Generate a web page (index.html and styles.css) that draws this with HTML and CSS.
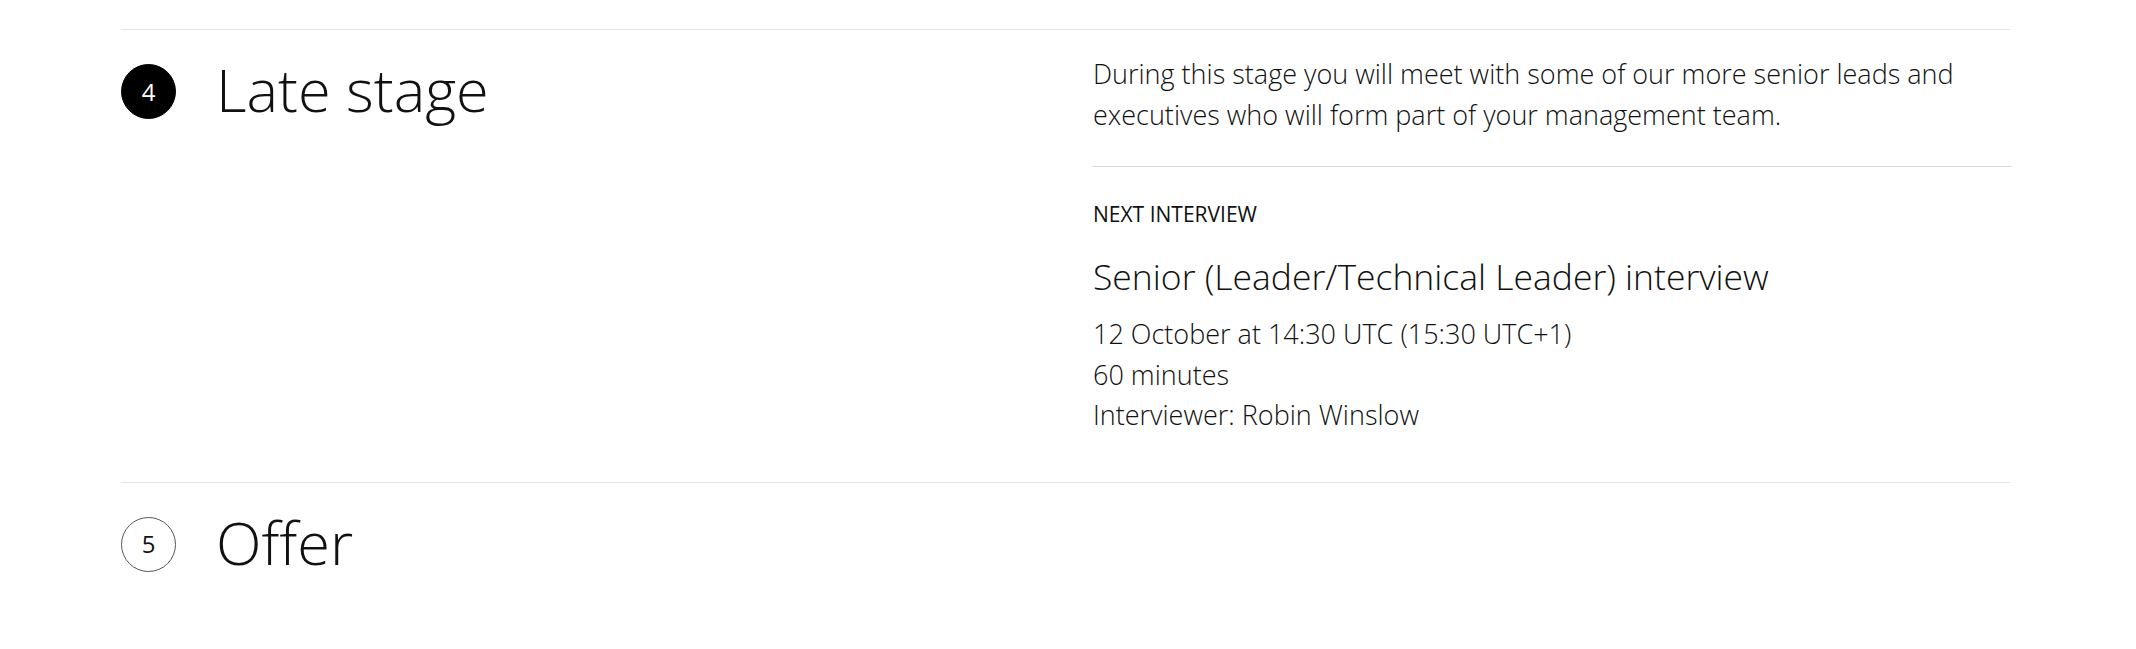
FILE: index.html
```html
<!DOCTYPE html>
<html lang="en">
<head>
<meta charset="utf-8">
<title>Interview stages</title>
<link rel="stylesheet" href="styles.css">
</head>
<body>
<main class="stages">
  <section class="stage">
    <div class="stage__title">
      <span class="stage__num stage__num--current">4</span>
      <h2 class="stage__heading">Late stage</h2>
    </div>
    <div class="stage__body">
      <p class="stage__desc">During this stage you will meet with some of our more senior leads and executives who will form part of your management team.</p>
      <hr class="stage__divider">
      <h4 class="label">NEXT INTERVIEW</h4>
      <h3 class="interview__title">Senior (Leader/Technical Leader) interview</h3>
      <ul class="interview__meta">
        <li>12 October at 14:30 UTC (15:30 UTC+1)</li>
        <li>60 minutes</li>
        <li>Interviewer: Robin Winslow</li>
      </ul>
    </div>
  </section>
  <section class="stage">
    <div class="stage__title">
      <span class="stage__num">5</span>
      <h2 class="stage__heading">Offer</h2>
    </div>
  </section>
</main>
</body>
</html>
```
FILE: styles.css
```css
body {
  margin: 0;
  background: #fff;
  color: #111;
  font-family: "Open Sans", "Noto Sans", sans-serif;
}

.stages {
  width: 1890px;
  margin-left: 121px;
  padding-top: 29px;
}

.stage {
  display: grid;
  grid-template-columns: 1fr 1fr;
  column-gap: 54px;
  border-top: 1px solid #e5e5e5;
  padding: 24px 0 46px;
}

.stage__title {
  display: flex;
  align-items: flex-start;
  gap: 40px;
}

.stage__num {
  flex: none;
  box-sizing: border-box;
  width: 55px;
  height: 55px;
  margin-top: 10px;
  border: 1px solid #555;
  border-radius: 50%;
  display: flex;
  align-items: center;
  justify-content: center;
  font-size: 24px;
  font-weight: 400;
  line-height: 1;
  color: #111;
  background: #fff;
}

.stage__num--current {
  background: #000;
  border-color: #000;
  color: #fff;
}

.stage__heading {
  margin: 0;
  font-size: 59.5px;
  font-weight: 300;
  line-height: 70px;
}

.stage__desc {
  margin: 0 0 31px;
  font-size: 27px;
  font-weight: 300;
  line-height: 40.5px;
}

.stage__divider {
  margin: 0 0 34px;
  height: 0;
  border: 0;
  border-top: 1px solid #d9d9d9;
}

.label {
  margin: 0 0 26px;
  font-size: 21px;
  font-weight: 400;
  line-height: 26px;
}

.interview__title {
  margin: 0 0 15px;
  font-size: 35.5px;
  font-weight: 300;
  line-height: 46px;
}

.interview__meta {
  list-style: none;
  margin: 0;
  padding: 0;
  font-size: 27px;
  font-weight: 300;
  line-height: 40.5px;
}
```
